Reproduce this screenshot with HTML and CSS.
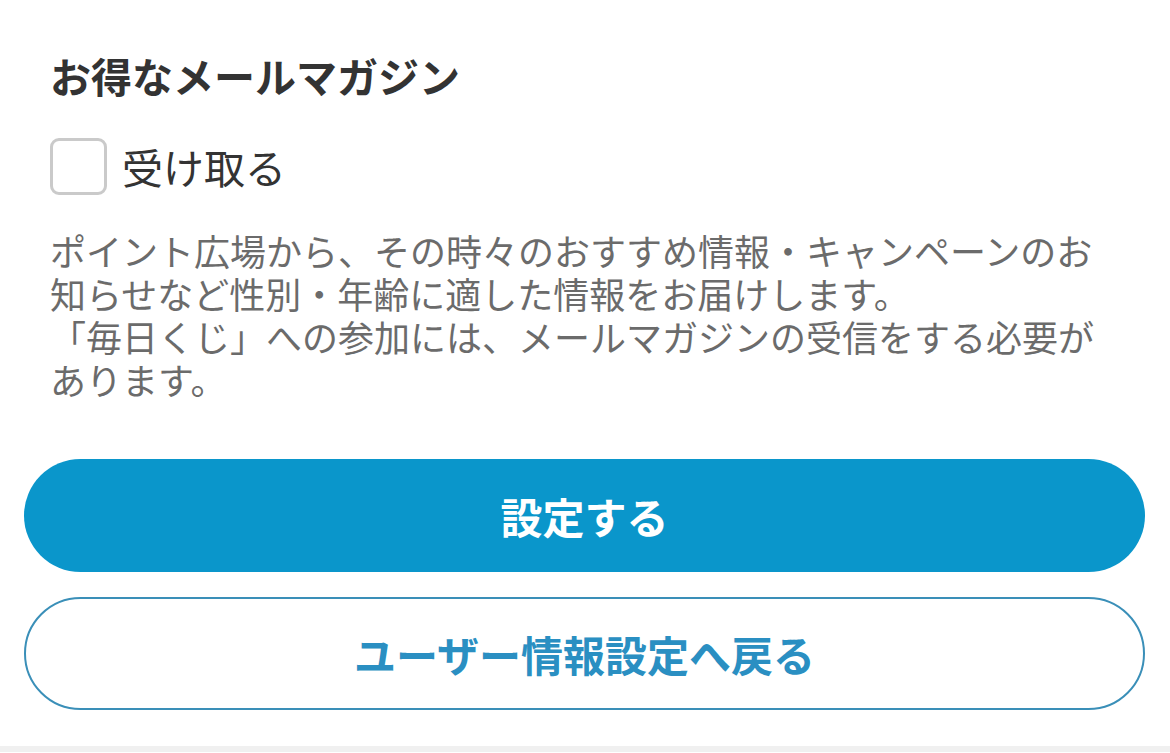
FILE: index.html
```html
<!DOCTYPE html>
<html>
<head>
    <meta http-equiv="Content-Type" content="text/html; charset=utf-8" />
    <title>メールマガジン設定</title>
    <link rel="stylesheet" href="styles.css">
</head>
<body>
  <div class="mail-setting">
    <h2 class="mail-title">お得なメールマガジン</h2>

    <label class="check-row">
      <input type="checkbox" class="check-input">
      <span class="check-box"></span>
      <span class="check-label">受け取る</span>
    </label>

    <p class="mail-note">ポイント広場から、その時々のおすすめ情報・キャンペーンのお知らせなど性別・年齢に適した情報をお届けします。<br>「毎日くじ」への参加には、メールマガジンの受信をする必要があります。</p>
  </div>

  <div class="button-area">
    <button class="btn btn-primary">設定する</button>
    <button class="btn btn-outline">ユーザー情報設定へ戻る</button>
  </div>

  <div class="bottom-bar"></div>
</body>
</html>
```

FILE: styles.css
```css
body {
    margin: 0;
    background-color: #fff;
    font-family: "Noto Sans CJK JP", "Noto Sans", sans-serif;
}

.mail-setting {
    padding: 45px 50px 0 50px;
}

.mail-title {
    margin: 0;
    font-size: 41px;
    line-height: 60px;
    font-weight: bold;
    color: #333;
}

.check-row {
    display: flex;
    align-items: center;
    height: 58px;
    margin-top: 32px;
    cursor: pointer;
}

.check-input {
    display: none;
}

.check-box {
    box-sizing: border-box;
    width: 57px;
    height: 57px;
    border: 3px solid #cacaca;
    border-radius: 9px;
    background-color: #fff;
}

.check-input:checked + .check-box {
    background-color: #0a96cb;
    border-color: #0a96cb;
}

.check-label {
    margin-left: 15px;
    font-size: 41px;
    line-height: 58px;
    color: #333;
}

.mail-note {
    margin: 34px 0 0 0;
    font-size: 36px;
    line-height: 43px;
    color: #6b6b6b;
}

.button-area {
    display: flex;
    flex-direction: column;
    gap: 25px;
    padding: 58px 25px 36px 24px;
}

.btn {
    box-sizing: border-box;
    width: 100%;
    height: 113px;
    border-radius: 57px;
    font-family: "Noto Sans CJK JP", "Noto Sans", sans-serif;
    font-size: 42px;
    font-weight: bold;
    cursor: pointer;
}

.btn-primary {
    background-color: #0a96cb;
    border: none;
    color: #fff;
}

.btn-outline {
    background-color: #fff;
    border: 2px solid #3a8fb8;
    color: #2a8fc2;
}

.bottom-bar {
    height: 6px;
    background-color: #f0f0f0;
}
```
